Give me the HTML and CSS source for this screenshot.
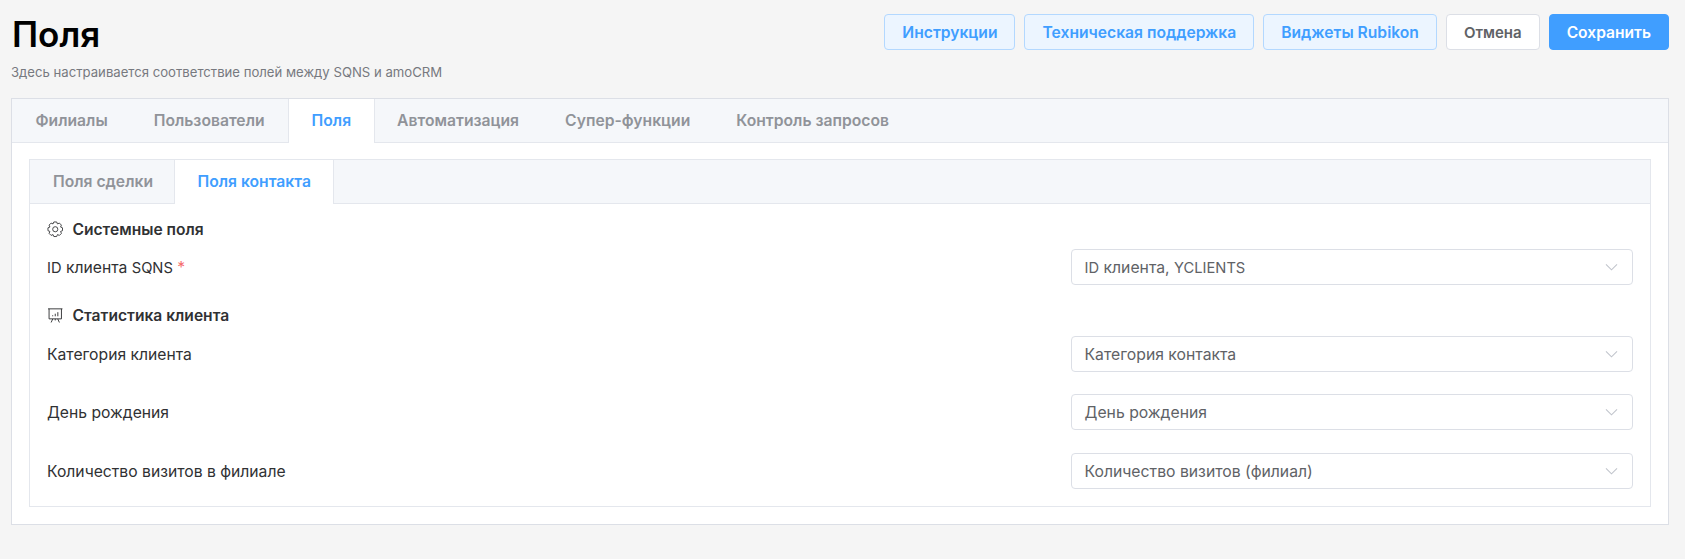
FILE: index.html
```html
<!DOCTYPE html>
<html lang="ru">
<head>
<meta charset="utf-8">
<title>Поля</title>
<link rel="stylesheet" href="styles.css">
</head>
<body>
<div class="page">
  <header class="head">
    <div class="head-text">
      <h1 class="title">Поля</h1>
      <p class="subtitle">Здесь настраивается соответствие полей между SQNS и amoCRM</p>
    </div>
    <div class="actions">
      <button class="btn btn-plain">Инструкции</button>
      <button class="btn btn-plain">Техническая поддержка</button>
      <button class="btn btn-plain">Виджеты Rubikon</button>
      <button class="btn btn-default">Отмена</button>
      <button class="btn btn-primary">Сохранить</button>
    </div>
  </header>
  <section class="card">
    <nav class="tabs">
      <span class="tab">Филиалы</span>
      <span class="tab tab-before">Пользователи</span>
      <span class="tab tab-active">Поля</span>
      <span class="tab">Автоматизация</span>
      <span class="tab">Супер-функции</span>
      <span class="tab">Контроль запросов</span>
    </nav>
    <div class="card-body">
      <section class="card inner">
        <nav class="tabs">
          <span class="tab tab-first">Поля сделки</span>
          <span class="tab tab-active">Поля контакта</span>
        </nav>
        <div class="panel">
          <h3 class="group group-first">
            <svg class="group-icon" viewBox="0 0 16 16" fill="none" stroke="#303133" stroke-width="0.85" stroke-linejoin="round"><path d="M15.070 6.630V9.370L13.170 10.140 13.970 12.030 12.030 13.970 10.140 13.170 9.370 15.070H6.630L5.860 13.170 3.970 13.970 2.030 12.030 2.830 10.140.93 9.370V6.630L2.830 5.860 2.030 3.970 3.970 2.030 5.860 2.830 6.630.93H9.370L10.140 2.830 12.030 2.030 13.970 3.970 13.170 5.860Z"/><circle cx="8" cy="8" r="2.500"/></svg>
            Системные поля
          </h3>
          <div class="row">
            <label class="label"><span class="lat">ID</span> клиента <span class="lat">SQNS</span> <span class="req">*</span></label>
            <div class="select"><span><span class="lat">ID</span> клиента, <span class="lat">YCLIENTS</span></span><svg class="arrow" viewBox="0 0 12 8" fill="none" stroke="#c0c4cc" stroke-width="1"><path d="M.8 1.200 6 6.400l5.200-5.200"/></svg></div>
          </div>
          <h3 class="group">
            <svg class="group-icon" viewBox="0 0 16 16" fill="none" stroke="#303133" stroke-width="0.9"><path d="M1 1.800h14M2 1.800v9.700h12V1.800M5.600 11.500 4 15M10.400 11.500 12 15M8 11.500V13M5.500 9V8M8 9V6.500M10.500 9V5"/></svg>
            Статистика клиента
          </h3>
          <div class="row">
            <label class="label">Категория клиента</label>
            <div class="select"><span>Категория контакта</span><svg class="arrow" viewBox="0 0 12 8" fill="none" stroke="#c0c4cc" stroke-width="1"><path d="M.8 1.200 6 6.400l5.200-5.200"/></svg></div>
          </div>
          <div class="row row-next">
            <label class="label">День рождения</label>
            <div class="select"><span>День рождения</span><svg class="arrow" viewBox="0 0 12 8" fill="none" stroke="#c0c4cc" stroke-width="1"><path d="M.8 1.200 6 6.400l5.200-5.200"/></svg></div>
          </div>
          <div class="row row-next">
            <label class="label">Количество визитов в филиале</label>
            <div class="select"><span>Количество визитов (филиал)</span><svg class="arrow" viewBox="0 0 12 8" fill="none" stroke="#c0c4cc" stroke-width="1"><path d="M.8 1.200 6 6.400l5.200-5.200"/></svg></div>
          </div>
        </div>
      </section>
    </div>
  </section>
</div>
</body>
</html>
```
FILE: styles.css
```css
* { box-sizing: border-box; }
html, body { margin: 0; height: 100%; background: #f5f5f5; overflow: hidden; }
body { font-family: Inter, "Noto Sans", sans-serif; color: #303133; }
.page { padding: 14px 16px 0 11px; }
.head { display: flex; justify-content: space-between; align-items: flex-start; height: 83.500px; }
.title { margin: 1.500px 0 0; font-size: 35px; line-height: 36px; font-weight: 600; color: #000; padding-left: 1px; }
.subtitle { margin: 12.500px 0 0; font-size: 13.150px; line-height: 16px; color: #77797f; }
.actions { display: flex; gap: 9px; }
.btn { height: 36px; padding: 0 17px; border-radius: 4px; border: 1px solid #dcdfe6; font: 600 15.650px Inter, sans-serif; background: #fff; color: #606266; }
.btn-plain { background: #ecf5ff; border-color: #b3d8ff; color: #409eff; }
.btn-default { font-size: 15px; }
.btn-primary { background: #409eff; border-color: #409eff; color: #fff; font-size: 15.600px; }
.card { background: #fff; border: 1px solid #dcdfe6; }
.tabs { display: flex; height: 44px; background: #f5f7fa; border-bottom: 1px solid #e4e7ed; }
.tab { display: flex; align-items: center; height: 44px; padding: 0 22.500px; font-size: 15.700px; font-weight: 600; color: #909399; border: 1px solid transparent; border-width: 0 1px; margin-left: -1px; }
.tab:first-child { margin-left: 0; border-left: 0; padding-left: 23.500px; }
.tab-before { padding-right: 23.500px; }
.tab-first { border-right-color: #e4e7ed; padding-right: 21px; }
.tab-active { background: #fff; color: #409eff; border-color: #e4e7ed; }
.card-body { padding: 16px 17.500px 17px 16.500px; }
.inner { border-color: #e4e7ed; }
.panel { padding: 17px 17px 17.500px; }
.group { display: flex; align-items: center; gap: 9.500px; margin: 22px 0 11px; height: 18px; font-size: 15.600px; line-height: 18px; font-weight: 600; color: #303133; }
.group-first { margin: 0 0 10px; }
.group-icon { width: 16.500px; height: 16.500px; flex: none; }
.row { display: flex; justify-content: space-between; align-items: center; }
.row-next { margin-top: 22.500px; }
.label { font-size: 15.700px; color: #303133; padding: 1px 0 0 .5px; }
.lat { font-size: 14.700px; }
.req { color: #f56c6c; }
.select { display: flex; justify-content: space-between; align-items: center; width: 562px; height: 36px; padding: 1px 13.500px 0 13px; border: 1px solid #dcdfe6; border-radius: 4px; font-size: 15.750px; color: #606266; background: #fff; }
.arrow { width: 13px; height: 8.500px; }
```
